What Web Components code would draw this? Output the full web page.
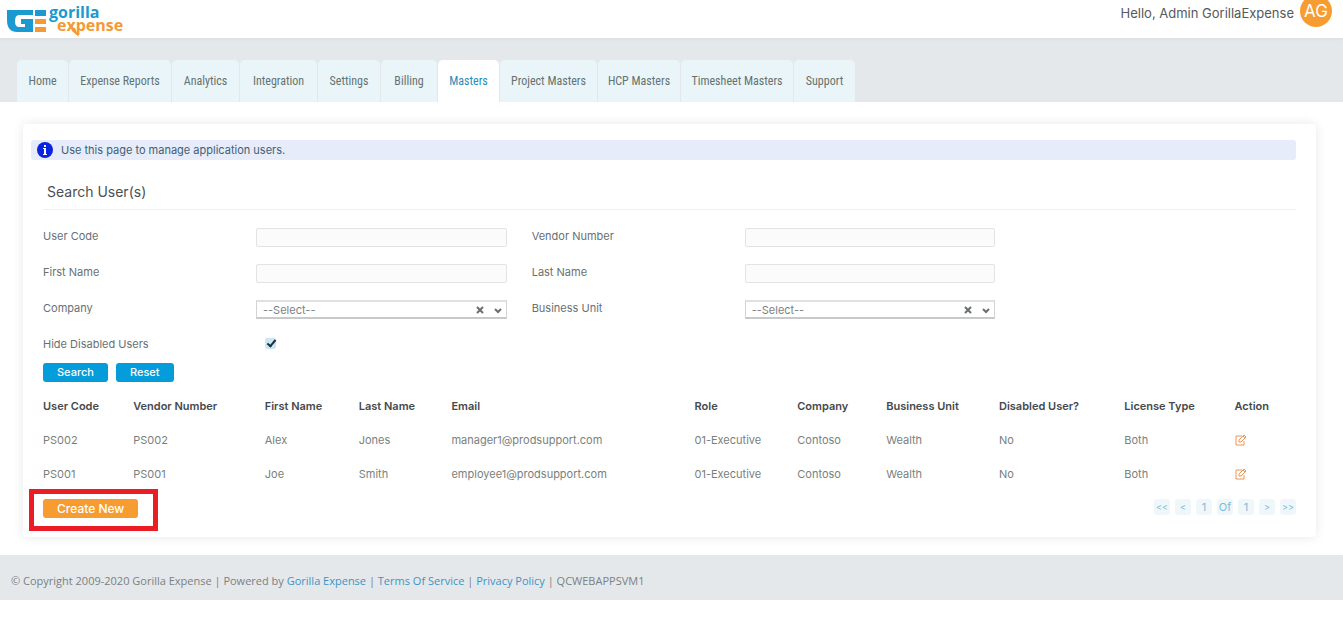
<!DOCTYPE html>
<html lang="en">
<head>
<meta charset="utf-8">
<title>Gorilla Expense</title>
<style>
  body {
    margin: 0;
    background: #fff;
    color: #6a6f73;
    font: 11px/16px Inter, "Open Sans", sans-serif;
  }
</style>
</head>
<body>
<users-page></users-page>

<script>
class SiteLogo extends HTMLElement {
  constructor() {
    super();
    this.attachShadow({ mode: "open" }).innerHTML = `
      <style>
        :host { display: block; }
        a { display: flex; gap: 3px; text-decoration: none; }
        .mark { width: 39px; height: 24px; margin-top: 3px; }
        .words { position: relative; display: flex; flex-direction: column; font: bold 16px/13px "Open Sans", sans-serif; }
        .top { color: #1b9ad2; }
        .bottom { color: #f39a35; padding-left: 8px; }
        .tail { position: absolute; left: 22px; top: 22px; width: 10px; height: 9px; }
      </style>
      <a href="#" aria-label="Gorilla Expense">
        <svg class="mark" viewBox="0 0 39 24">
          <path fill="#1b9ad2" d="M0 1h26v5H12q-4 0-4 6t4 6h6v-3h-4v-5h12v13H10Q0 23 0 11z"/>
          <path fill="#1b9ad2" d="M28 1h11v6H28z"/>
          <path fill="#f39a35" d="M28 10h11v5H28zM28 18h11v5H28z"/>
        </svg>
        <span class="words">
          <span class="top">gorilla</span>
          <span class="bottom">expense</span>
          <svg class="tail" viewBox="0 0 10 9"><path fill="#f39a35" d="M0 0h4l4 9L1 3z"/></svg>
        </span>
      </a>
    `;
  }
}
customElements.define("site-logo", SiteLogo);

class SiteHeader extends HTMLElement {
  constructor() {
    super();
    this.attachShadow({ mode: "open" }).innerHTML = `
      <style>
        :host { display: block; position: relative; background: #fff; box-shadow: 0 1px 3px #d8dcdf; }
        header { display: flex; justify-content: space-between; height: 38px; padding: 0 11px 0 7px; box-sizing: border-box; }
        site-logo { padding-top: 6px; }
        .user { display: flex; align-items: flex-start; gap: 6px; color: #55595c; font-size: 13px; line-height: 27px; }
        .avatar { width: 32px; height: 32px; margin-top: -5px; border-radius: 50%; background: #f79c31; color: #fff; font-size: 17px; line-height: 32px; text-align: center; }
      </style>
      <header>
        <site-logo></site-logo>
        <div class="user"><span><slot></slot></span><span class="avatar">AG</span></div>
      </header>
    `;
  }
}
customElements.define("site-header", SiteHeader);

class TabBar extends HTMLElement {
  constructor() {
    super();
    const tabs = [
      ["Home", 51], ["Expense Reports", 102], ["Analytics", 67], ["Integration", 77],
      ["Settings", 62], ["Billing", 56], ["Masters", 61], ["Project Masters", 97],
      ["HCP Masters", 82], ["Timesheet Masters", 112], ["Support", 61],
    ];
    this.attachShadow({ mode: "open" }).innerHTML = `
      <style>
        :host { display: block; background: #e4e8eb; }
        nav { display: flex; gap: 1px; padding: 22px 17px 0; }
        a {
          box-sizing: border-box;
          padding: 0 6px;
          border-radius: 5px 5px 0 0;
          background: #eaf5fa;
          color: #64736f;
          font: 12px/42px "Roboto Condensed", Roboto, sans-serif;
          text-align: center;
          text-decoration: none;
          white-space: nowrap;
        }
        a[aria-current] { background: #fff; color: #2a8bb8; }
      </style>
      <nav>${tabs.map(([name, width]) => `<a href="#" style="min-width: ${width}px"${name === "Masters" ? ' aria-current="page"' : ""}>${name}</a>`).join("")}</nav>
    `;
  }
}
customElements.define("tab-bar", TabBar);

class InfoBar extends HTMLElement {
  constructor() {
    super();
    this.attachShadow({ mode: "open" }).innerHTML = `
      <style>
        :host { display: flex; align-items: center; gap: 8px; height: 20px; padding-left: 6px; border-radius: 3px; background: #e6ecf9; color: #3f5f78; }
        svg { width: 16px; height: 16px; }
      </style>
      <svg viewBox="0 0 16 16" aria-hidden="true">
        <circle cx="8" cy="8" r="8" fill="#0a24e0"/>
        <path fill="#fff" d="M7 3h2v2H7zM6 6h3v6h1v1H6v-1h1V7H6z"/>
      </svg>
      <span><slot></slot></span>
    `;
  }
}
customElements.define("info-bar", InfoBar);

class FormField extends HTMLElement {
  constructor() {
    super();
    this.attachShadow({ mode: "open" });
  }

  connectedCallback() {
    const label = this.getAttribute("label");
    const type = this.getAttribute("type") || "text";
    this.shadowRoot.innerHTML = `
      <style>
        :host { display: grid; grid-template-columns: 17fr 20fr 2fr; height: 20px; }
        label { line-height: 16px; }
        input, select { box-sizing: border-box; margin: 0; font: inherit; color: inherit; }
        .text { width: 100%; height: 19px; padding: 0 6px; border: 1px solid #e2e3e4; border-radius: 2px; background: #fbfbfb; }
        .select { position: relative; color: #7d8184; }
        select { appearance: none; width: 100%; height: 19px; padding: 0 50px 0 6px; border: 1px solid #d2d3d4; border-top: 2px solid #dfe0e1; border-bottom: 2px solid #c8c9ca; border-radius: 0; background: #fff; }
        button { position: absolute; right: 23px; top: 6px; width: 8px; height: 8px; padding: 0; border: 0; background: none; }
        svg { display: block; width: 8px; height: 8px; fill: none; stroke: #6b6e70; stroke-width: 2; }
        .arrow { position: absolute; right: 5px; top: 6px; pointer-events: none; }
        .check { appearance: none; width: 11px; height: 11px; margin: 2px 9px; border-radius: 2px; background: #cde6f2; }
        .check:checked::before { content: ""; display: block; width: 3px; height: 7px; margin-left: 4px; border: solid #16324a; border-width: 0 2px 2px 0; transform: rotate(40deg); }
      </style>
      <label for="control">${label}</label>
      ${this._control(type)}
    `;
    const clear = this.shadowRoot.querySelector("button");
    if (clear) {
      clear.addEventListener("click", () => {
        this.shadowRoot.querySelector("select").selectedIndex = 0;
      });
    }
  }

  _control(type) {
    switch (type) {
      case "select":
        return `
          <div class="select">
            <select id="control"><option>--Select--</option></select>
            <button type="button" aria-label="Clear"><svg viewBox="0 0 8 8"><path d="M1 1l6 6M7 1L1 7"/></svg></button>
            <svg class="arrow" viewBox="0 0 8 8"><path d="M1 3l3 3 3-3"/></svg>
          </div>`;
      case "checkbox":
        return `<input id="control" class="check" type="checkbox" checked>`;
      default:
        return `<input id="control" class="text" type="text">`;
    }
  }
}
customElements.define("form-field", FormField);

class ActionButton extends HTMLElement {
  constructor() {
    super();
    this.attachShadow({ mode: "open" }).innerHTML = `
      <style>
        :host { display: inline-block; --fill: #049cdb; }
        :host([kind="create"]) { --fill: #f79c31; font-size: 12px; }
        button { display: block; padding: 0 14px; border: 0; border-radius: 3px; background: var(--fill); color: #fff; font: inherit; font-weight: 500; line-height: 19px; }
      </style>
      <button type="button"><slot></slot></button>
    `;
  }
}
customElements.define("action-button", ActionButton);

class UserTable extends HTMLElement {
  constructor() {
    super();
    this.attachShadow({ mode: "open" });
    this._users = [
      ["PS002", "PS002", "Alex", "Jones", "manager1@prodsupport.com", "01-Executive", "Contoso", "Wealth", "No", "Both"],
      ["PS001", "PS001", "Joe", "Smith", "employee1@prodsupport.com", "01-Executive", "Contoso", "Wealth", "No", "Both"],
    ];
    this.render();
  }

  render() {
    const columns = [
      ["User Code", 7.2], ["Vendor Number", 10.5], ["First Name", 7.5], ["Last Name", 7.4],
      ["Email", 19.4], ["Role", 8.2], ["Company", 7.1], ["Business Unit", 9],
      ["Disabled User?", 10], ["License Type", 8.8], ["Action", 4.9],
    ];
    const edit = `
      <button type="button" aria-label="Edit">
        <svg viewBox="0 0 12 12"><path d="M7 2H1v9h8V7M4 8V6l5-5 2 2-5 5zM8 2l2 2"/></svg>
      </button>`;
    this.shadowRoot.innerHTML = `
      <style>
        :host { display: block; }
        table { width: 100%; table-layout: fixed; border-collapse: collapse; }
        th, td { height: 34px; padding: 0; text-align: left; white-space: nowrap; }
        th { color: #45494d; font-weight: 600; }
        td { color: #7a807d; }
        button { display: block; padding: 0; border: 0; background: none; }
        svg { display: block; width: 12px; height: 12px; fill: none; stroke: #ee9455; }
      </style>
      <table>
        <colgroup>${columns.map(([, width]) => `<col style="width: ${width}%">`).join("")}</colgroup>
        <thead><tr>${columns.map(([name]) => `<th>${name}</th>`).join("")}</tr></thead>
        <tbody>
          ${this._users.map((user) => `<tr>${user.map((cell) => `<td>${cell}</td>`).join("")}<td>${edit}</td></tr>`).join("")}
        </tbody>
      </table>
    `;
  }
}
customElements.define("user-table", UserTable);

class PageNav extends HTMLElement {
  constructor() {
    super();
    this.attachShadow({ mode: "open" }).innerHTML = `
      <style>
        :host { display: flex; gap: 5px; }
        button, span { width: 16px; height: 16px; padding: 0; border: 0; border-radius: 3px; background: #eff7fb; color: #7dbcd8; font: inherit; line-height: 16px; text-align: center; }
        button { font-size: 9px; }
      </style>
      <button type="button">&lt;&lt;</button>
      <button type="button">&lt;</button>
      <span>1</span><span>Of</span><span>1</span>
      <button type="button">&gt;</button>
      <button type="button">&gt;&gt;</button>
    `;
  }
}
customElements.define("page-nav", PageNav);

class SiteFooter extends HTMLElement {
  constructor() {
    super();
    this.attachShadow({ mode: "open" }).innerHTML = `
      <style>
        :host { display: block; background: #e4e8eb; color: #7b8083; font-family: "Open Sans", sans-serif; }
        footer { padding: 18px 11px 11px; }
        a { color: #3d94c5; text-decoration: none; }
      </style>
      <footer>© Copyright 2009-2020 Gorilla Expense | Powered by <a href="#">Gorilla Expense</a> | <a href="#">Terms Of Service</a> | <a href="#">Privacy Policy</a> | QCWEBAPPSVM1</footer>
    `;
  }
}
customElements.define("site-footer", SiteFooter);

class UsersPage extends HTMLElement {
  constructor() {
    super();
    this.attachShadow({ mode: "open" }).innerHTML = `
      <style>
        :host { display: block; }
        main { margin: 22px 27px 18px 23px; padding: 16px 20px 19px; border-radius: 4px; background: #fff; box-shadow: 0 0 12px #e6e7e8; }
        info-bar { margin-left: -12px; }
        h1 { margin: 0 0 18px; padding: 20px 4px 5px; border-bottom: 1px solid #eeeff0; color: #4b5054; font-size: 14px; font-weight: 400; line-height: 24px; }
        .fields { display: grid; grid-template-columns: 39% 39%; row-gap: 16px; }
        .buttons { display: flex; gap: 8px; margin: 7px 0; }
        .bottom { display: flex; justify-content: space-between; align-items: flex-start; margin-top: 8px; }
        .marked { position: relative; }
        .marked::after { content: ""; position: absolute; inset: -10px -20px -13px -14px; border: 5px solid #ea1c24; pointer-events: none; }
      </style>
      <site-header>Hello, Admin GorillaExpense</site-header>
      <tab-bar></tab-bar>
      <main>
        <info-bar>Use this page to manage application users.</info-bar>
        <h1>Search User(s)</h1>
        <div class="fields">
          <form-field label="User Code"></form-field>
          <form-field label="Vendor Number"></form-field>
          <form-field label="First Name"></form-field>
          <form-field label="Last Name"></form-field>
          <form-field label="Company" type="select"></form-field>
          <form-field label="Business Unit" type="select"></form-field>
          <form-field label="Hide Disabled Users" type="checkbox"></form-field>
        </div>
        <div class="buttons">
          <action-button>Search</action-button>
          <action-button>Reset</action-button>
        </div>
        <user-table></user-table>
        <div class="bottom">
          <div class="marked"><action-button kind="create">Create New</action-button></div>
          <page-nav></page-nav>
        </div>
      </main>
      <site-footer></site-footer>
    `;
  }
}
customElements.define("users-page", UsersPage);
</script>
</body>
</html>
